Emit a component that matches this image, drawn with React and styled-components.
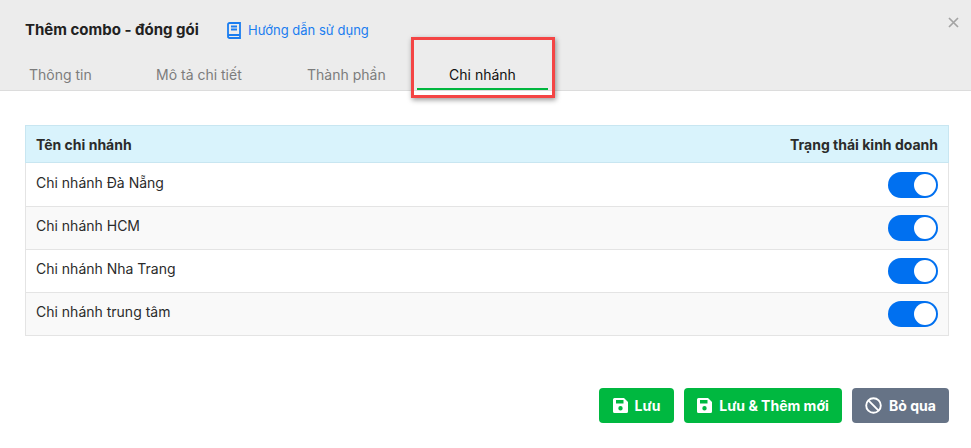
import React from "react";
import styled, { createGlobalStyle } from "styled-components";

const Global = createGlobalStyle`
  html, body { margin: 0; padding: 0; background: #fff; }
  body { font-family: Inter, "Liberation Sans", sans-serif; width: 971px; height: 448px; overflow: hidden; }
`;
const Page = styled.div`
  position: relative; width: 971px; height: 448px; background: #fff; display: flex; flex-direction: column;
`;
const Header = styled.header`
  position: relative; height: 90px; background: #ececec; border-bottom: 1px solid #dcdcdc;
  display: flex; flex-direction: column; padding-left: 25px;
`;
const TitleRow = styled.div`
  display: flex; align-items: center; height: 20px; margin-top: 20px;
`;
const Title = styled.h1`
  margin: 0; font: 700 15px/20px Inter, sans-serif; color: #212121; width: 201px; white-space: nowrap;
`;
const GuideLink = styled.a`
  display: flex; align-items: center; gap: 6px; color: #1a7df0; font: 400 13px/20px Inter, sans-serif;
`;
const Tabs = styled.nav`
  display: flex; margin-top: 17px; height: 33px;
`;
const Tab = styled.div`
  box-sizing: border-box; width: ${p => p.$w}px; margin-left: ${p => p.$ml || 0}px; height: 33px; padding-top: 8px;
  font: 400 14px/20px Inter, sans-serif;
  color: ${p => (p.$active ? "#111" : "#7c7c7c")};
  text-align: ${p => (p.$active ? "center" : "left")};
  border-bottom: ${p => (p.$active ? "2px solid #00b63e" : "none")};
`;
const CloseBtn = styled.button`
  position: absolute; top: 15px; right: 11px; padding: 0; border: 0; background: none; width: 14px; height: 14px;
  color: #a4a4a4; display: flex; align-items: center; justify-content: center;
`;
const Highlight = styled.div`
  position: absolute; left: 411px; top: 37px; width: 144px; height: 61px; box-sizing: border-box;
  border: 3px solid #f44545; box-shadow: 1px 2px 5px rgba(0,0,0,.4); pointer-events: none;
`;
const Table = styled.div`
  margin: 34px 22px 0 25px; border: 1px solid #e4e4e4; display: flex; flex-direction: column;
`;
const HeadRow = styled.div`
  height: 35px; padding: 1px 10px 0; margin: -1px -1px 0; background: #d9f3fc; border: 1px solid #c8e6f1; display: flex;
  align-items: center; justify-content: space-between; font: 700 14px/20px Inter, sans-serif; color: #2b2b2b;
`;
const Row = styled.div`
  box-sizing: border-box; height: 43px; padding: 0 10px; display: flex; align-items: center; justify-content: space-between;
  background: ${p => (p.$alt ? "#f9f9f9" : "#fff")}; font: 400 14px/20px Inter, sans-serif; color: #2b2b2b;
  & + & { border-top: 1px solid #e4e4e4; }
`;
const RowName = styled.span`
  margin-bottom: 4px;
`;
const Switch = styled.span`
  position: relative; width: 50px; height: 26px; border-radius: 13px; background: #0070f0; display: block;
  &::after { content: ""; position: absolute; right: 2px; top: 2px; width: 22px; height: 22px; border-radius: 50%; background: #fff; }
`;
const Footer = styled.footer`
  display: flex; justify-content: flex-end; gap: 10px; margin: 52px 22px 0 0;
`;
const Button = styled.button`
  height: 35px; box-sizing: border-box; border: 0; border-radius: 4px; padding: 0 13px; display: flex; align-items: center; gap: 7px;
  color: #fff; background: ${p => (p.$muted ? "#667386" : "#00b840")}; font: 700 14px/20px Inter, sans-serif;
  min-width: ${p => p.$min || 0}px; justify-content: center;
`;

const Book = () => (
  <svg width="16" height="17" viewBox="0 0 16 17" fill="none" stroke="#1a7df0" strokeWidth="1.8">
    <path d="M2 14V2.6A1.6 1.6 0 0 1 3.6 1H14v12H3.6A1.6 1.6 0 0 0 2 14.6 1.4 1.4 0 0 0 3.6 16H14v-3" />
    <path d="M5 4.5h6M5 7.5h6" />
  </svg>
);
const Save = () => (
  <svg width="15" height="15" viewBox="0 0 15 15">
    <path fill="#fff" fillRule="evenodd" d="M1.5 0H11l4 4v9.5a1.5 1.5 0 0 1-1.5 1.5h-12A1.5 1.5 0 0 1 0 13.5v-12A1.5 1.5 0 0 1 1.5 0ZM3 2v3.5h7.5V2H3Zm4.5 6a2.2 2.2 0 1 0 0 4.4 2.2 2.2 0 0 0 0-4.4Z" />
  </svg>
);
const Ban = () => (
  <svg width="17" height="17" viewBox="0 0 17 17" fill="none" stroke="#fff" strokeWidth="1.9">
    <circle cx="8.5" cy="8.5" r="7.3" />
    <path d="M3.4 3.4l10.2 10.2" />
  </svg>
);
const branches = ["Chi nhánh Đà Nẵng", "Chi nhánh HCM", "Chi nhánh Nha Trang", "Chi nhánh trung tâm"];

export default function App() {
  return (
    <Page>
      <Global />
      <Header>
        <TitleRow>
          <Title>Thêm combo - đóng gói</Title>
          <GuideLink><Book />Hướng dẫn sử dụng</GuideLink>
        </TitleRow>
        <Tabs>
          <Tab $w={127} $ml={4}>Thông tin</Tab>
          <Tab $w={151}>Mô tả chi tiết</Tab>
          <Tab $w={110}>Thành phần</Tab>
          <Tab $w={131} $active>Chi nhánh</Tab>
        </Tabs>
        <CloseBtn aria-label="Đóng">
          <svg width="11" height="11" viewBox="0 0 11 11" stroke="currentColor" strokeWidth="1.7"><path d="M1 1l9 9M10 1l-9 9" /></svg>
        </CloseBtn>
      </Header>
      <Highlight />
      <Table>
        <HeadRow><span>Tên chi nhánh</span><span>Trạng thái kinh doanh</span></HeadRow>
        {branches.map((b, i) => (
          <Row key={b} $alt={i % 2 === 1}><RowName>{b}</RowName><Switch /></Row>
        ))}
      </Table>
      <Footer>
        <Button $min={75}><Save />Lưu</Button>
        <Button $min={158}><Save />Lưu &amp; Thêm mới</Button>
        <Button $min={97} $muted><Ban />Bỏ qua</Button>
      </Footer>
    </Page>
  );
}
